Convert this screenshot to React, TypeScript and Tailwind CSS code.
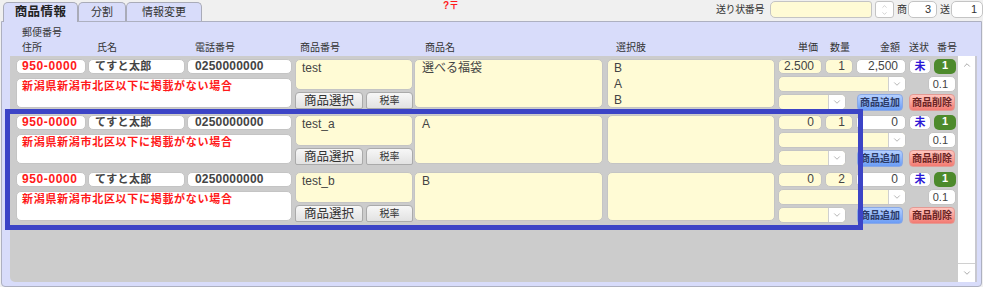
import { ChevronDown, ChevronUp } from "lucide-react";

const rows = [
  {
    code: "test",
    name: "選べる福袋",
    options: ["B", "A", "B"],
    price: "2.500",
    qty: "1",
    total: "2,500",
    gap: "",
  },
  { code: "test_a", name: "A", options: [], price: "0", qty: "1", total: "0", gap: "mt-[5px]" },
  { code: "test_b", name: "B", options: [], price: "0", qty: "2", total: "0", gap: "mt-[6px]" },
];

const box = "border border-[#c4c4c4] rounded-[5px]";

function Select({ w }: { w: string }) {
  return (
    <div className={`${w} h-[16px] ${box} bg-[#fffbd5] flex justify-end overflow-hidden`}>
      <div className="w-[17px] h-full bg-white border-l border-[#d0d0d0] flex items-center justify-center">
        <ChevronDown size={10} strokeWidth={1.5} className="text-[#888]" />
      </div>
    </div>
  );
}

function Row({ r }: { r: (typeof rows)[number] }) {
  return (
    <div className={`flex h-[51px] ${r.gap}`}>
      {/* customer */}
      <div className="w-[276px] flex flex-col">
        <div className="flex gap-[2px] h-[15px]">
          <div className={`w-[70px] ${box} bg-white pl-[5px] text-[12px] leading-[13px] font-bold text-[#ff1a1a] tracking-[0.6px]`}>
            950-0000
          </div>
          <div className={`w-[97px] ${box} bg-white pl-[6px] text-[11px] leading-[13px] font-bold text-[#444] tracking-[0.3px]`}>
            てすと太郎
          </div>
          <div className={`w-[105px] ${box} bg-white pl-[7px] text-[12px] leading-[13px] font-bold text-[#444] tracking-[0.2px]`}>
            0250000000
          </div>
        </div>
        <div className={`mt-[4px] h-[30px] ${box} bg-white pl-[5px] pt-[1px] text-[11px] leading-[13px] font-bold text-[#ff1a1a] tracking-[0.7px]`}>
          新潟県新潟市北区以下に掲載がない場合
        </div>
      </div>

      {/* product code */}
      <div className="ml-[3px] w-[118px] flex flex-col">
        <div className={`h-[31px] ${box} bg-[#fffbd5] pl-[6px] text-[12px] leading-[16px] text-[#444]`}>{r.code}</div>
        <div className="mt-[2px] flex gap-[3px] h-[17px]">
          <div className="w-[68px] border border-[#aaa] rounded-t-[4px] rounded-b-[2px] bg-gradient-to-b from-[#f7f7f7] to-[#e2e2e2] text-[12.5px] leading-[16px] text-center text-[#333]">
            商品選択
          </div>
          <div className="w-[47px] border border-[#aaa] rounded-t-[4px] rounded-b-[2px] bg-gradient-to-b from-[#f7f7f7] to-[#e2e2e2] text-[10px] leading-[16px] text-center text-[#333]">
            税率
          </div>
        </div>
      </div>

      <div className={`ml-[1px] w-[189px] h-[49px] ${box} bg-[#fffbd5] pl-[7px] text-[12px] leading-[16px] text-[#444]`}>{r.name}</div>

      <div className={`ml-[4px] w-[168px] h-[49px] ${box} bg-[#fffbd5] pl-[6px] text-[12px] leading-[16px] text-[#444]`}>
        {r.options.map((o, i) => (
          <div key={i}>{o}</div>
        ))}
      </div>

      {/* amounts */}
      <div className="ml-[3px] w-[178px] flex flex-col">
        <div className="flex h-[15px] gap-[3px] text-[12px] leading-[13px] text-[#444]">
          <div className={`w-[44px] ${box} bg-[#fffbd5] text-right pr-[7px]`}>{r.price}</div>
          <div className={`w-[28px] ${box} bg-[#fffbd5] text-right pr-[7px]`}>{r.qty}</div>
          <div className={`w-[50px] ${box} bg-white text-right pr-[7px]`}>{r.total}</div>
          <div className={`w-[22px] ${box} bg-white text-center text-[11px] font-bold text-[#2b17d6]`}>未</div>
          <div className="w-[22px] rounded-[5px] bg-[#4d8a2c] text-center text-[11px] font-bold text-white">1</div>
        </div>
        <div className="mt-[2px] flex h-[16px]">
          <Select w="w-[128px]" />
          <div className={`ml-auto w-[28px] ${box} bg-white text-right pr-[7px] text-[11px] leading-[14px] text-[#444]`}>0.1</div>
        </div>
        <div className="mt-[2px] flex h-[16px]">
          <Select w="w-[68px]" />
          <div className="ml-[11px] w-[46px] h-[17px] rounded-[4px] border border-[#8aa9e6] bg-gradient-to-b from-[#b4d0ff] to-[#6b9cf5] text-[10px] leading-[15px] font-bold text-center text-[#2c3a66]">
            商品追加
          </div>
          <div className="ml-[6px] w-[46px] h-[17px] rounded-[4px] border border-[#e39a94] bg-gradient-to-b from-[#ffc6bf] to-[#f27a72] text-[10px] leading-[15px] font-bold text-center text-[#6a2424]">
            商品削除
          </div>
        </div>
      </div>
    </div>
  );
}

export default function App() {
  return (
    <div className="w-[983px] h-[287px] bg-[#f0f0f0] relative overflow-hidden text-[#333] font-['Liberation_Sans','Noto_Sans_CJK_JP',sans-serif]">
      {/* top bar */}
      <div className="flex h-[21px]">
        <div className="flex items-end pl-[3px]">
          <div className="relative z-10 w-[75px] h-[20px] mb-[-1px] border border-b-0 border-[#a9abb8] rounded-t-[5px] bg-[#d8dcfa] text-center text-[12.5px] leading-[18px] font-bold text-[#222] tracking-[0.4px]">
            商品情報
          </div>
          <div className="w-[48px] h-[19px] border border-b-0 border-[#a9abb8] rounded-t-[5px] bg-[#d8dcfa] text-center text-[11px] leading-[18px] text-[#333]">
            分割
          </div>
          <div className="w-[76px] h-[19px] border border-b-0 border-[#a9abb8] rounded-t-[5px] bg-[#d8dcfa] text-center text-[11px] leading-[18px] text-[#333]">
            情報変更
          </div>
        </div>
        <div className="ml-[241px] text-[10px] leading-[11px] font-bold text-[#ff1a1a]">?〒</div>
        <div className="ml-auto flex items-start pt-[1px] text-[10px] text-[#333]">
          <span className="leading-[17px] mr-[6px] tracking-[-0.4px]">送り状番号</span>
          <div className={`w-[102px] h-[17px] ${box} rounded-r-[3px] bg-[#fffbd5]`} />
          <div className="ml-[3px] w-[19px] h-[17px] border border-[#c4c4c4] rounded-[3px] bg-white flex flex-col items-center justify-center">
            <ChevronUp size={7} strokeWidth={1.5} className="text-[#999]" />
            <ChevronDown size={7} strokeWidth={1.5} className="text-[#999]" />
          </div>
          <span className="ml-[3px] leading-[17px]">商</span>
          <div className={`ml-[1px] w-[29px] h-[17px] ${box} bg-white text-right pr-[5px] text-[11px] leading-[15px]`}>3</div>
          <span className="ml-[3px] leading-[17px]">送</span>
          <div className={`ml-[1px] w-[32px] h-[17px] ${box} bg-white text-right pr-[5px] text-[11px] leading-[15px]`}>1</div>
        </div>
      </div>

      {/* panel */}
      <div className="mx-[1px] h-[266px] border border-[#adb0c0] rounded-b-[4px] bg-[#d8dcfa] pl-[8px] pr-[4px] pt-[5px] flex flex-col">
        <div className="pl-[12px] h-[12px] text-[10px] leading-[12px]">郵便番号</div>
        <div className="mt-[3px] flex h-[12px] pl-[12px] text-[10px] leading-[12px]">
          <span className="w-[75px]">住所</span>
          <span className="w-[98px]">氏名</span>
          <span className="w-[105px]">電話番号</span>
          <span className="w-[125px]">商品番号</span>
          <span className="w-[191px]">商品名</span>
          <span className="w-[182px]">選択肢</span>
          <span className="w-[32px]">単価</span>
          <span className="w-[50px]">数量</span>
          <span className="w-[29px]">金額</span>
          <span className="w-[28px]">送状</span>
          <span>番号</span>
        </div>
        <div className="mt-[2px] flex h-[226px]">
          <div className="flex-1 bg-[#cccccc] rounded-bl-[5px] pl-[6px] pt-[3px] flex flex-col">
            {rows.map((r, i) => (
              <Row key={i} r={r} />
            ))}
          </div>
          <div className="w-[19px] bg-white border-r-2 border-[#c8c8d0] flex flex-col justify-between">
            <div className="h-[16px] flex items-center justify-center mt-[1px]">
              <ChevronUp size={10} strokeWidth={1.5} className="text-[#777]" />
            </div>
            <div className="h-[19px] border-t border-[#d0d0d0] flex items-center justify-center">
              <ChevronDown size={10} strokeWidth={1.5} className="text-[#777]" />
            </div>
          </div>
        </div>
      </div>

      {/* selection highlight */}
      <div className="absolute left-[5px] top-[109px] w-[858px] h-[121px] border-[5px] border-[#3c44c6] pointer-events-none" />
    </div>
  );
}
